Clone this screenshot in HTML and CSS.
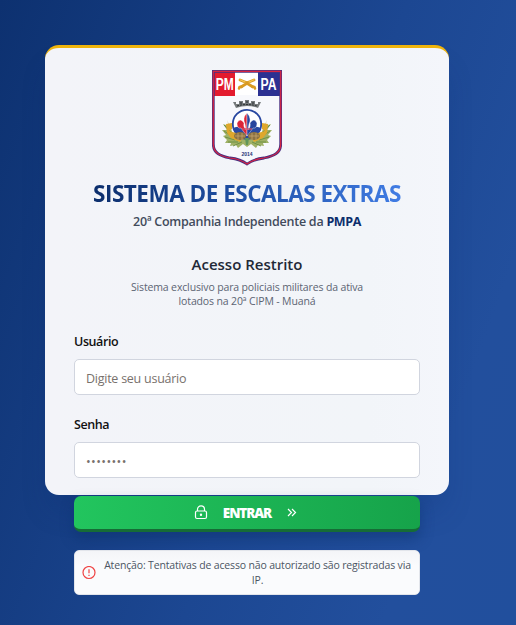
FILE: index.html
```html
<!DOCTYPE html>
<html lang="pt-BR">
<head>
<meta charset="utf-8">
<title>Sistema de Escalas Extras</title>
<link rel="stylesheet" href="styles.css">
</head>
<body>
<main class="card">
  <svg class="crest" viewBox="0 0 70 96" width="70" height="96" role="img" aria-label="PMPA">
    <defs>
      <clipPath id="shield"><path d="M0 0H70V74C70 84 63 87 52 89C43 90 39 92 35 95C31 92 27 90 18 89C7 87 0 84 0 74Z"/></clipPath>
    </defs>
    <g clip-path="url(#shield)">
      <path fill="#f7f8fc" d="M0 0H70V96H0Z"/>
      <path fill="#e31b2e" d="M0 0H23V26H0Z"/>
      <path fill="#fff" d="M23 2H46V25H23Z"/>
      <path fill="#2c3192" d="M46 0H70V26H46Z"/>
    </g>
    <path d="M1.300 1.300H68.700V74C68.700 83 62 86 52 88C43 89 39 91 35 94C31 91 27 89 18 88C8 86 1.300 83 1.300 74Z" fill="none" stroke="#4a3080" stroke-width="2.800"/>
    <path d="M1.300 1.300H68.700V74C68.700 83 62 86 52 88C43 89 39 91 35 94C31 91 27 89 18 88C8 86 1.300 83 1.300 74Z" fill="none" stroke="#d92440" stroke-width="1.200"/>
    <text x="12.800" y="20" class="crest-letters" textLength="18" lengthAdjust="spacingAndGlyphs">PM</text>
    <text x="56.500" y="20" class="crest-letters" textLength="16" lengthAdjust="spacingAndGlyphs">PA</text>
    <g fill="none" stroke="#d99a22" stroke-linecap="round" stroke-linejoin="round">
      <path d="M28 10L33 12L41 17M42 10L37 12L29 17" stroke-width="2.800"/>
      <path d="M30 16.500L27.500 17L27 18.500M40 16.500L42.500 17L43 18.500" stroke-width="2.400"/>
      <path d="M28 9.800L33 12M42 9.800L37 12" stroke="#f2c755" stroke-width="1.200"/>
    </g>
    <path d="M21 32H24V34H27V31H31V33H33V30H37V33H39V31H43V34H46V32H49L46 38Q35 34 24 38Z" fill="#777b7c"/>
    <path d="M25 36Q35 33 45 36M35 31V34M29 32V35M41 32V35" fill="none" stroke="#292d30" stroke-width="1" stroke-dasharray="2 1"/>
    <path d="M15 50L17 56L11 54L15 60L10 60L14 65L11 66L15 70L13 73L19 73L18 76L24 75L26 78L31 74L35 77L39 74L44 78L46 75L52 76L51 73L57 73L55 70L59 66L56 65L60 60L55 60L59 54L53 56L55 50L48 66H22Z" fill="#a0b166"/>
    <path d="M20 63L12 55M21 67L12 61M23 70L13 67M26 72L16 72M30 72L21 76M50 63L58 55M49 67L58 61M47 70L57 67M44 72L54 72M40 72L49 76" stroke="#6f9144" stroke-width="1"/>
    <circle cx="35" cy="54" r="14.200" fill="#fff" stroke="#2847a0" stroke-width="1.800"/>
    <path d="M21 58Q28 55 35 59Q42 55 49 58Q47 68 35 70Q23 68 21 58Z" fill="#2949a2"/>
    <path d="M35 43Q30 48 33 54L34 60Q31 57 32 53Q28 47 25 53Q25 59 29 58Q31 61 35 66Z" fill="#db2638" stroke="#fff" stroke-width=".4"/>
    <path d="M35 43Q40 48 37 54L36 60Q39 57 38 53Q42 47 45 53Q45 59 41 58Q39 61 35 66Z" fill="#28459e" stroke="#fff" stroke-width=".4"/>
    <path d="M30 59H40" stroke="#d95065" stroke-width="1.200"/>
    <path d="M14 54L20 53L20 59L17 61L24 63L31 66L28 72L19 68L15 63ZM56 54L50 53L50 59L53 61L46 63L39 66L42 72L51 68L55 63Z" fill="#dfa72c"/>
    <ellipse cx="28" cy="66" rx="6" ry="4" fill="#8c7142"/><ellipse cx="42" cy="66" rx="6" ry="4" fill="#8c7142"/>
    <path d="M23 66H33M26 63V70M30 63V70M37 66H47M40 63V70M44 63V70" stroke="#c5a56c" stroke-width=".8"/>
    <path d="M33 68H37L36 75H34Z" fill="#60965a"/>
    <text x="35" y="86" class="crest-year">2014</text>
  </svg>
  <h1 class="title"><span>SISTEMA DE ESCALAS EXTRAS</span></h1>
  <p class="unit"><span>20ª Companhia Independente da <strong>PMPA</strong></span></p>
  <h2 class="access"><span>Acesso Restrito</span></h2>
  <p class="intro">Sistema exclusivo para policiais militares da ativa<br>lotados na 20ª CIPM - Muaná</p>
  <form class="form">
    <label class="label" for="user">Usuário</label>
    <input class="field" id="user" type="text" placeholder="Digite seu usuário">
    <label class="label" for="password">Senha</label>
    <input class="field password" id="password" type="password" placeholder="••••••••">
    <button class="submit" type="button">
      <svg width="14" height="16" viewBox="0 0 14 16" fill="none" stroke="currentColor" stroke-width="1.200"><rect x="1.500" y="6" width="11" height="7.500" rx="1.500"/><path d="M3.500 6V4.300a3.500 3.500 0 0 1 7 0v1.700"/><circle cx="7" cy="9.700" r=".6" fill="currentColor"/></svg>
      <span>ENTRAR</span>
      <svg class="chevrons" width="10" height="10" viewBox="0 0 10 10" fill="none" stroke="currentColor" stroke-width="1.200"><path d="M1 1L4.500 4.500L1 8M5 1L8.500 4.500L5 8"/></svg>
    </button>
  </form>
  <aside class="notice">
    <svg width="14" height="14" viewBox="0 0 14 14" fill="none" stroke="currentColor" stroke-width="1.200"><circle cx="7" cy="6.500" r="6"/><path d="M7 3.200V7.200M7 8.800V10"/></svg>
    <p>Atenção: Tentativas de acesso não autorizado são registradas via<br>IP.</p>
  </aside>
</main>
</body>
</html>
```

FILE: styles.css
```css
* { box-sizing: border-box; }
body {
  margin: 0;
  height: 625px;
  padding: 45px 67px 0 45px;
  overflow: hidden;
  font-family: "Open Sans", "Noto Sans", sans-serif;
  background: linear-gradient(110deg, #0d3170 0%, #1c4792 55%, #224f9d 82%, #214f9d 100%);
}
h1, h2, p { margin: 0; font-weight: inherit; }
.card {
  height: 450px;
  padding: 22px 29px 0;
  border-top: 3px solid #efb40b;
  border-radius: 14px;
  background: linear-gradient(90deg, #f3f4f9, #f2f5f9 80%, #f4f6fb);
  box-shadow: 0 20px 30px -8px #0b2d6b40;
  text-align: center;
  white-space: nowrap;
}
.crest { display: block; margin: 0 auto; }
.crest-letters { font: 700 16px "Liberation Sans", sans-serif; fill: #fff; text-anchor: middle; }
.crest-year { font: 700 5px "Liberation Sans", sans-serif; fill: #263478; text-anchor: middle; }
.title, .unit, .access { display: flex; justify-content: center; }
.title { height: 30px; margin-top: 12px; font-size: 22.500px; line-height: 31px; font-weight: 700; letter-spacing: -.5px; }
.title span { background: linear-gradient(90deg, #0c2e6c, #2152a8 50%, #407ce4); background-clip: text; color: transparent; }
.unit { height: 20px; margin-top: 4px; font-size: 12.500px; line-height: 20px; font-weight: 600; color: #424b5c; letter-spacing: -.25px; }
.unit strong { color: #0c2e6c; font-weight: 700; letter-spacing: -.4px; }
.access { height: 24px; margin-top: 20px; font-size: 15px; line-height: 24px; font-weight: 600; color: #1f2937; }
.intro { margin-top: 4px; font-size: 10.500px; line-height: 14px; color: #5c6473; letter-spacing: -.14px; }
.form { margin-top: 25px; text-align: left; }
.label { display: block; height: 18px; margin-bottom: 8px; font-size: 12.500px; line-height: 18px; font-weight: 600; letter-spacing: -.4px; color: #111; }
.field { display: block; width: 100%; height: 36px; margin: 0 0 21px; padding: 2px 11px 0; border: 1px solid #d1d5df; border-radius: 5px; background: #fff; font: 12.500px "Open Sans", sans-serif; letter-spacing: -.25px; }
.field::placeholder { color: #78716c; opacity: 1; }
.password { margin-bottom: 18px; letter-spacing: .4px; }
.submit { display: flex; align-items: center; justify-content: center; gap: 15px; width: 100%; height: 36px; padding: 0 3px 0 0; border: 0; border-bottom: 3px solid #166c36; border-radius: 7px; background: linear-gradient(90deg, #22c55e, #16a34a); background-clip: border-box; color: #fff; font: 800 13.500px "Open Sans", sans-serif; letter-spacing: -1.050px; box-shadow: 0 7px 14px #082b6566; }
.submit .chevrons { margin-left: 1px; }
.notice { display: flex; align-items: center; height: 45px; margin-top: 18px; padding: 0 8px 0 7px; border: 1px solid #e2e5eb; border-radius: 5px; background: linear-gradient(#f4f5f8, #fafbfd 35%); color: #ef4444; }
.notice svg { flex: none; margin-right: 8px; }
.notice p { flex: 1; font-size: 10.500px; line-height: 15px; color: #4b5563; letter-spacing: -.16px; }
```
